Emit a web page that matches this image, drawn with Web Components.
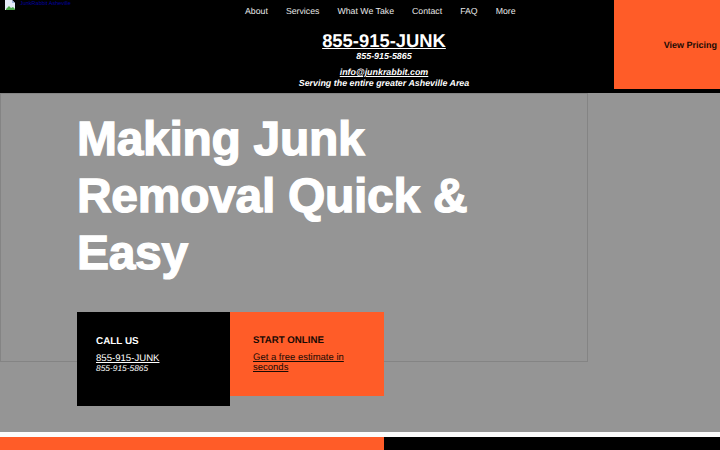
<!DOCTYPE html>
<html><head><meta charset="utf-8"><style>
html,body{margin:0;padding:0;width:720px;height:450px;overflow:hidden;background:#fff;font-family:"Liberation Sans",Arial,sans-serif;text-rendering:geometricPrecision}
</style></head><body>
<site-page>
<site-header slot="header"></site-header>
<hero-section slot="hero"></hero-section>
<bottom-band slot="bottom"></bottom-band>
</site-page>
<script>
function def(name,html){customElements.define(name,class extends HTMLElement{constructor(){super();this.attachShadow({mode:'open'}).innerHTML=html}})}
def('site-page',`<style>:host{display:flex;flex-direction:column;width:720px;height:450px;overflow:hidden}</style><slot name="header"></slot><slot name="hero"></slot><slot name="bottom"></slot>`);
def('site-header',`<style>
:host{display:flex;height:93px;background:#000;color:#fff;flex:none}
.logo{width:245px;flex:none;display:flex;align-items:flex-start;gap:4px;padding:0 0 0 5px;box-sizing:border-box;color:#0000a0;font-size:5.5px;line-height:8px}
.logo svg{flex:none}
.mid{flex:1;display:flex;flex-direction:column;align-items:flex-start}
nav{display:flex;gap:18px;font-size:8.75px;line-height:13px;padding-top:5px;color:#e8e8e8;height:30px;box-sizing:border-box}
.info{width:278px;display:flex;flex-direction:column;align-items:center;font-weight:bold}
.big{font-size:18.4px;line-height:22px;text-decoration:underline}
.i{font-style:italic;font-size:8.9px;line-height:10px;margin-top:-1px}
.mail{margin-top:6px;text-decoration:underline}
.area{margin-top:1px}
.cta{width:106px;height:89px;flex:none;background:#ff5c28;color:#1a0a04;font-weight:bold;font-size:9px;display:flex;align-items:center;justify-content:flex-end;padding-right:3px;box-sizing:border-box}
</style>
<div class="logo"><svg width="11" height="10" viewBox="0 0 11 10"><path d="M0 0h7l3 3v7H0z" fill="#e4eaf7"/><path d="M7 0v3h3z" fill="#9fb4dc"/><path d="M1 9l3-3 2 2 2-1 2 2v1H1z" fill="#4aa84a"/></svg><span>JunkRabbit Asheville</span></div>
<div class="mid"><nav><span>About</span><span>Services</span><span>What We Take</span><span>Contact</span><span>FAQ</span><span>More</span></nav>
<div class="info"><span class="big">855-915-JUNK</span><span class="i">855-915-5865</span><span class="i mail">info@junkrabbit.com</span><span class="i area">Serving the entire greater Asheville Area</span></div></div>
<div class="cta">View Pricing</div>`);
def('hero-section',`<style>
:host{display:block;height:339px;background:#959595;flex:none;position:relative}
.outline{position:absolute;left:0;top:0;width:588px;height:269px;box-sizing:border-box;border:1px solid #848484}
.content{position:relative;padding:18px 0 0 77px}
h1{margin:0;width:430px;color:#fff;font-size:48px;line-height:57px;font-weight:bold;height:201px;letter-spacing:-.3px;-webkit-text-stroke:1.3px #fff}
.cards{display:flex;align-items:flex-start}
.call{width:153px;height:94px;background:#000;color:#fff;box-sizing:border-box;padding:23px 0 0 19px}
.start{width:154px;height:84px;background:#ff5c28;color:#1a0a04;box-sizing:border-box;padding:22px 0 0 23px}
h2{margin:0;font-size:9.9px;line-height:14px;font-weight:bold}
.start h2{font-size:9.7px}
a{display:block;color:inherit;text-decoration:underline;font-size:9.6px;line-height:10.5px}
.call a{margin-top:5px}.start a{margin-top:4.5px;width:110px}
.start a{font-size:9.5px}
.i{font-style:italic;font-size:8.4px;line-height:10px;margin-top:-1.5px}
</style><div class="outline"></div>
<div class="content"><h1>Making Junk Removal Quick &amp; Easy</h1>
<div class="cards"><div class="call"><h2>CALL US</h2><a>855-915-JUNK</a><div class="i">855-915-5865</div></div>
<div class="start"><h2>START ONLINE</h2><a>Get a free estimate in seconds</a></div></div></div>`);
def('bottom-band',`<style>:host{display:flex;flex:none;border-top:5px solid #fbfbfb;height:13px}.o{width:384px;background:#ff5c28}.b{flex:1;background:#000}</style><div class="o"></div><div class="b"></div>`);
</script></body></html>
